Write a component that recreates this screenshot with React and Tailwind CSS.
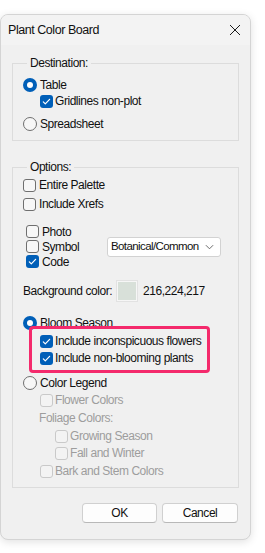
import React from 'react';

const CheckMark = () => (
  <svg viewBox="0 0 13 13" className="h-[13px] w-[13px]" fill="none" stroke="white" strokeWidth={1.2} strokeLinecap="round" strokeLinejoin="round">
    <path d="M3.3 6.8l2 2 4.3-4.5" />
  </svg>
);

function Checkbox({ checked, disabled }) {
  if (checked) {
    return (
      <span className="flex h-[13px] w-[13px] shrink-0 items-center justify-center rounded-[3px] bg-[#005fb8]">
        <CheckMark />
      </span>
    );
  }
  return (
    <span
      className={`h-[13px] w-[13px] shrink-0 rounded-[3px] border ${
        disabled ? 'border-[#c9c9c9] bg-[#f3f3f3]' : 'border-[#6f6f6f] bg-[#f7f7f7]'
      }`}
    />
  );
}

function Radio({ checked }) {
  if (checked) {
    return (
      <span className="flex h-[14px] w-[14px] shrink-0 items-center justify-center rounded-full bg-[#005fb8]">
        <span className="h-[6px] w-[6px] rounded-full bg-white" />
      </span>
    );
  }
  return <span className="h-[14px] w-[14px] shrink-0 rounded-full border border-[#6f6f6f] bg-[#f7f7f7]" />;
}

function Row({ children, className = '' }) {
  return <div className={`flex h-[16px] items-center ${className}`}>{children}</div>;
}

export default function App() {
  return (
    <div className="h-[553px] w-[265px] bg-white pt-[14px] font-['Liberation_Sans',Arial,sans-serif] text-[12px] tracking-[-0.45px] text-[#111]">
      <div className="w-[251px] overflow-hidden rounded-[8px] border border-[#d4d4d4] bg-[#f0f0f0] shadow-[0_2px_8px_rgba(0,0,0,0.12)]">
        {/* title bar */}
        <div className="flex h-[30px] items-center justify-between bg-[#f3f3f3] pl-[7px] pr-[9px]">
          <span className="text-[12.5px]">Plant Color Board</span>
          <svg viewBox="0 0 12 12" className="h-[12px] w-[12px]" fill="none" stroke="#1b1b1b" strokeWidth={1}>
            <path d="M1 1l10 10M11 1L1 11" />
          </svg>
        </div>

        <div className="px-[11px] pb-[16px]">
          {/* Destination */}
          <fieldset className="mt-[11px] border border-[#dcdcdc] pb-[8px] pl-[10px]">
            <legend className="ml-[4px] px-[3px] leading-[14px]">Destination:</legend>
            <Row className="mt-[7px] gap-[3px]">
              <Radio checked />
              <span>Table</span>
            </Row>
            <Row className="gap-[2px] pl-[17px]">
              <Checkbox checked />
              <span>Gridlines non-plot</span>
            </Row>
            <Row className="mt-[7px] gap-[3px]">
              <Radio />
              <span>Spreadsheet</span>
            </Row>
          </fieldset>

          {/* Options */}
          <fieldset className="mt-[19px] border border-[#dcdcdc] pb-[8px] pl-[10px]">
            <legend className="ml-[4px] px-[3px] leading-[14px]">Options:</legend>
            <Row className="mt-[3px] gap-[3px]">
              <Checkbox />
              <span>Entire Palette</span>
            </Row>
            <Row className="mt-[3px] gap-[3px]">
              <Checkbox />
              <span>Include Xrefs</span>
            </Row>

            <div className="mt-[12px] flex items-center">
              <div className="w-[84px] pl-[3px]">
                <div className="flex h-[15px] items-center gap-[3px]">
                  <Checkbox />
                  <span>Photo</span>
                </div>
                <div className="flex h-[15px] items-center gap-[3px]">
                  <Checkbox />
                  <span>Symbol</span>
                </div>
                <div className="flex h-[15px] items-center gap-[3px]">
                  <Checkbox checked />
                  <span>Code</span>
                </div>
              </div>
              <div className="flex h-[20px] w-[114px] items-center justify-between rounded-[3px] border border-[#d2d2d2] bg-white pl-[3px] pr-[6px]">
                <span className="text-[11.5px] tracking-[-0.6px]">Botanical/Common</span>
                <svg viewBox="0 0 10 6" className="h-[6px] w-[9px]" fill="none" stroke="#5a5a5a" strokeWidth={1}>
                  <path d="M1 1l4 4 4-4" />
                </svg>
              </div>
            </div>

            <div className="mt-[12px] flex h-[20px] items-center">
              <span className="w-[94px]">Background color:</span>
              <span className="h-[20px] w-[20px] border border-[#f6f6f6] bg-[#d8e0d9] shadow-[0_0_0_1px_#e2e2e2]" />
              <span className="ml-[6px]">216,224,217</span>
            </div>

            <div className="relative mt-[14px]">
              <Row className="gap-[3px]">
                <Radio checked />
                <span>Bloom Season</span>
              </Row>
              <Row className="mt-[2px] gap-[2px] pl-[17px]">
                <Checkbox checked />
                <span>Include inconspicuous flowers</span>
              </Row>
              <Row className="mt-[1px] gap-[2px] pl-[17px]">
                <Checkbox checked />
                <span>Include non-blooming plants</span>
              </Row>
              {/* highlight annotation */}
              <div className="absolute left-[6px] top-[11px] h-[47px] w-[181px] rounded-[4px] border-[3px] border-[#f42a6c]" />
            </div>

            <Row className="mt-[9px] gap-[3px]">
              <Radio />
              <span>Color Legend</span>
            </Row>
            <Row className="mt-[1px] gap-[2px] pl-[17px] text-[#9d9d9d]">
              <Checkbox disabled />
              <span>Flower Colors</span>
            </Row>
            <Row className="mt-[2px] pl-[16px] text-[#9d9d9d]">
              <span>Foliage Colors:</span>
            </Row>
            <Row className="mt-[2px] gap-[2px] pl-[32px] text-[#9d9d9d]">
              <Checkbox disabled />
              <span>Growing Season</span>
            </Row>
            <Row className="mt-[1px] gap-[2px] pl-[32px] text-[#9d9d9d]">
              <Checkbox disabled />
              <span>Fall and Winter</span>
            </Row>
            <Row className="mt-[2px] gap-[2px] pl-[17px] text-[#9d9d9d]">
              <Checkbox disabled />
              <span>Bark and Stem Colors</span>
            </Row>
          </fieldset>

          {/* buttons */}
          <div className="mt-[15px] flex justify-end gap-[5px] pr-[1px]">
            <button className="h-[20px] w-[75px] rounded-[4px] border border-[#d0d0d0] border-b-[#b8b8b8] bg-[#fdfdfd]">OK</button>
            <button className="h-[20px] w-[76px] rounded-[4px] border border-[#d0d0d0] border-b-[#b8b8b8] bg-[#fdfdfd]">Cancel</button>
          </div>
        </div>
      </div>
    </div>
  );
}
